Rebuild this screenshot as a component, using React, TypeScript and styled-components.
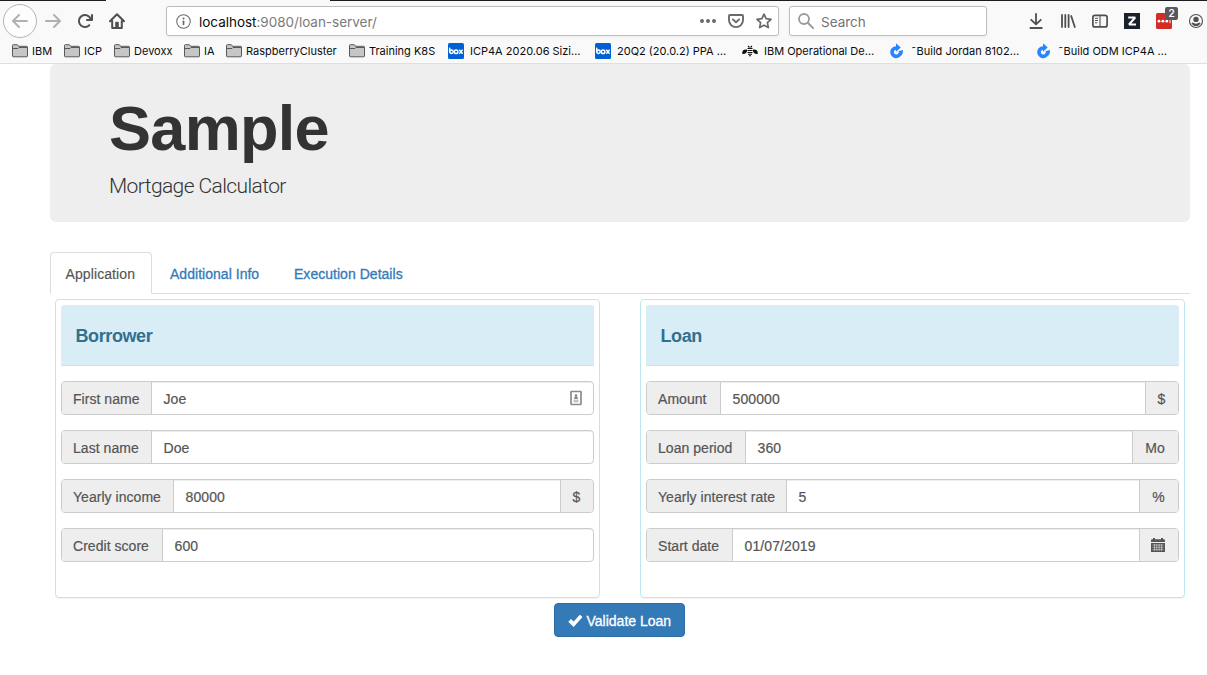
import React from "react";
import styled, { createGlobalStyle } from "styled-components";

const Global = createGlobalStyle`
  * { box-sizing: border-box; }
  html, body { margin: 0; height: 100%; overflow: hidden; background: #fff; }
  body {
    font-family: "Liberation Sans", Arial, sans-serif;
    font-size: 14px;
    line-height: 20px;
    color: #333;
  }
  svg { display: block; flex: none; }
`;

/* ---------- Browser chrome ---------- */

const Chrome = styled.header`
  height: 64px;
  background: #f9f9fa;
  border-bottom: 1px solid #dedede;
  font-family: Inter, sans-serif;
  color: #0c0c0d;
  display: flex;
  flex-direction: column;
`;

const TabStrip = styled.div`
  height: 1px;
  flex: none;
  background: linear-gradient(to right, #1c1b1f 106px, #f9f9fa 106px, #f9f9fa 330px, #1c1b1f 330px);
`;

const NavBar = styled.div`
  height: 40px;
  flex: none;
  display: flex;
  align-items: center;
  padding-left: 3px;
`;

const BackButton = styled.div`
  width: 34px;
  height: 34px;
  border: 1px solid #b4b4b5;
  border-radius: 50%;
  background: #fdfdfd;
  display: flex;
  align-items: center;
  justify-content: center;
`;

const NavIcons = styled.div`
  display: flex;
  gap: 16px;
  margin: 0 41px 0 8px;
`;

const Field = styled.div<{ $width: number }>`
  width: ${(p) => p.$width}px;
  height: 30px;
  flex: none;
  display: flex;
  align-items: center;
  background: #fff;
  border: 1px solid #bdbdbe;
  border-radius: 3px;
  box-shadow: 0 1px 3px rgba(0, 0, 0, 0.05);
  font-size: 14px;
`;

const UrlField = styled(Field)`
  padding: 0 6px 0 9px;
  margin-right: 10px;
`;

const SearchField = styled(Field)`
  padding: 0 8px;
  gap: 7px;
  color: #737373;
  margin-right: 41px;
  font-size: 13.5px;
`;

const FieldText = styled.span`
  padding-top: 1px;
`;

const Url = styled(FieldText)`
  flex: 1;
  margin-left: 8px;
  color: #7a7a7b;
  font-size: 13.5px;
  letter-spacing: -0.02px;
  b { font-weight: 400; color: #0c0c0d; }
`;

const FieldIcons = styled.div`
  display: flex;
  gap: 12px;
`;

const Tools = styled.div`
  display: flex;
  gap: 16px;
`;

const Badged = styled.div`
  position: relative;
`;

const Badge = styled.span`
  position: absolute;
  left: 9px;
  top: -6px;
  width: 13px;
  height: 13px;
  border-radius: 2px;
  background: #58595b;
  color: #fff;
  font-size: 10px;
  font-weight: 600;
  line-height: 13px;
  text-align: center;
`;

const Bookmarks = styled.div`
  height: 20px;
  display: flex;
  align-items: center;
  padding-left: 12px;
  font-size: 11px;
  line-height: 16px;
`;

const Bookmark = styled.div<{ $width: number; $gap: number }>`
  width: ${(p) => p.$width}px;
  flex: none;
  display: flex;
  align-items: center;
  gap: ${(p) => p.$gap}px;
  white-space: nowrap;
`;

/* ---------- Page ---------- */

const Page = styled.main`
  width: 1140px;
  margin-left: 50px;
`;

const Hero = styled.section`
  height: 158px;
  padding: 29px 59px 0;
  margin-bottom: 30px;
  background: #eee;
  border-radius: 6px;
`;

const Title = styled.h1`
  margin: 0 0 10px;
  font-size: 63px;
  line-height: 70px;
  font-weight: 700;
  letter-spacing: -0.7px;
`;

const Subtitle = styled.p`
  margin: 0;
  font-family: Roboto, sans-serif;
  font-size: 21px;
  line-height: 26px;
  font-weight: 300;
  letter-spacing: -0.6px;
`;

const Tabs = styled.nav`
  display: flex;
  gap: 2px;
  height: 42px;
  border-bottom: 1px solid #ddd;
`;

const Tab = styled.a<{ $active?: boolean; $width: number }>`
  width: ${(p) => p.$width}px;
  height: 42px;
  padding: 11px 0 0 ${(p) => (p.$active ? 14.5 : 15)}px;
  border: 1px solid ${(p) => (p.$active ? "#ddd" : "transparent")};
  border-bottom-color: ${(p) => (p.$active ? "#fff" : "transparent")};
  border-radius: 4px 4px 0 0;
  background: ${(p) => (p.$active ? "#fff" : "transparent")};
  color: ${(p) => (p.$active ? "#555" : "#337ab7")};
  letter-spacing: ${(p) => (p.$active ? 0.1 : 0.03)}px;
  -webkit-text-stroke: ${(p) => (p.$active ? "0.15px" : "0.3px")};
  white-space: nowrap;
`;

const Columns = styled.div`
  display: grid;
  grid-template-columns: 545px 545px;
  gap: 40px;
  padding: 5px;
`;

const Panel = styled.section`
  height: 299px;
  padding: 5px;
  border: 1px solid #bce8f1;
  border-radius: 4px;
  box-shadow: 0 1px 1px rgba(0, 0, 0, 0.05);
`;

const PanelHeading = styled.h3`
  height: 61px;
  margin: 0 0 15px;
  padding: 1px 14.5px 0;
  border-bottom: 1px solid #bce8f1;
  border-radius: 3px 3px 0 0;
  background: #d9edf7;
  color: #31708f;
  font-size: 18px;
  line-height: 61px;
  font-weight: 700;
  letter-spacing: -0.4px;
`;

const Group = styled.div`
  display: flex;
  height: 34px;
  margin-bottom: 15px;
  border: 1px solid #ccc;
  border-radius: 4px;
  overflow: hidden;
  color: #555;
  line-height: 34px;
  -webkit-text-stroke: 0.2px;
`;

const Label = styled.label<{ $width: number }>`
  width: ${(p) => p.$width}px;
  padding-left: 11px;
  background: #eee;
  border-right: 1px solid #ccc;
  letter-spacing: 0.04px;
  white-space: nowrap;
`;

const Value = styled.div`
  flex: 1;
  display: flex;
  align-items: center;
  justify-content: space-between;
  padding: 0 11px 0 11.5px;
  box-shadow: inset 0 1px 1px rgba(0, 0, 0, 0.075);
  span { padding-top: 2px; letter-spacing: 0.1px; }
`;

const Unit = styled.div<{ $width: number }>`
  width: ${(p) => p.$width}px;
  padding: 1px 1px 0 0;
  display: flex;
  align-items: center;
  justify-content: center;
  background: #eee;
  border-left: 1px solid #ccc;
  svg { margin: 0 2px 2px 0; }
`;

const Submit = styled.button`
  display: flex;
  align-items: center;
  gap: 4px;
  width: 131px;
  height: 34px;
  margin-left: 504px;
  padding: 2px 0 0 12.5px;
  border: 1px solid #2e6da4;
  border-radius: 4px;
  background: #337ab7;
  color: #fff;
  font: 14px/20px "Liberation Sans", Arial, sans-serif;
  -webkit-text-stroke: 0.3px;
  white-space: nowrap;
`;

/* ---------- Icons ---------- */

const Glyph = ({ children, color = "#4f4f51", size = 16 }: { children: React.ReactNode; color?: string; size?: number }) => (
  <svg width={size} height={size} viewBox="0 0 16 16" fill={color} stroke="none" color={color}>
    {children}
  </svg>
);

const Back = () => (
  <Glyph color="#b0b0b1"><path d="M15 7H3.414l4.293-4.293a1 1 0 0 0-1.414-1.414l-6 6a1 1 0 0 0 0 1.414l6 6a1 1 0 0 0 1.414-1.414L3.414 9H15a1 1 0 0 0 0-2z" /></Glyph>
);
const Forward = () => (
  <Glyph color="#b0b0b1"><path d="M15.707 7.293l-6-6a1 1 0 0 0-1.414 1.414L12.586 7H1a1 1 0 0 0 0 2h11.586l-4.293 4.293a1 1 0 1 0 1.414 1.414l6-6a1 1 0 0 0 0-1.414z" /></Glyph>
);
const Reload = () => (
  <Glyph><path d="M15 1a1 1 0 0 0-1 1v2.418A6.995 6.995 0 1 0 8 15a6.954 6.954 0 0 0 4.95-2.05 1 1 0 0 0-1.414-1.414A5.019 5.019 0 1 1 12.549 6H10a1 1 0 0 0 0 2h5a1 1 0 0 0 1-1V2a1 1 0 0 0-1-1z" /></Glyph>
);
const Home = () => (
  <Glyph>
    <path d="M1 8.2L8 1.3l7 6.9M3.2 8v7h9.6V8" fill="none" stroke="currentColor" strokeWidth="2" strokeLinejoin="round" strokeLinecap="round" />
    <path d="M6.2 15V9.8a1 1 0 0 1 1-1h1.6a1 1 0 0 1 1 1V15z" />
  </Glyph>
);
const Info = () => (
  <Glyph color="#6a6a6b" size={15}>
    <circle cx="8" cy="8" r="7.2" fill="none" stroke="currentColor" strokeWidth="1.1" />
    <circle cx="8" cy="4.7" r="1.1" />
    <rect x="7.1" y="6.9" width="1.8" height="5" rx=".9" />
  </Glyph>
);
const Dots = () => (
  <Glyph color="#6a6a6b">
    <circle cx="2" cy="8" r="2" /><circle cx="8" cy="8" r="2" /><circle cx="14" cy="8" r="2" />
  </Glyph>
);
const Pocket = () => (
  <Glyph color="#6a6a6b">
    <path d="M1.9 2h12.2a.9.9 0 0 1 .9.9v4.2a7 7 0 0 1-14 0V2.9A.9.9 0 0 1 1.9 2z" fill="none" stroke="currentColor" strokeWidth="1.9" />
    <path d="M4.9 6.4L8 9.3l3.1-2.9" fill="none" stroke="currentColor" strokeWidth="1.9" strokeLinecap="round" strokeLinejoin="round" />
  </Glyph>
);
const Star = () => (
  <Glyph color="#6a6a6b">
    <path d="M8 1.2l2.1 4.5 4.9.6-3.6 3.4.95 4.9L8 12.2l-4.35 2.4.95-4.9L1 6.3l4.9-.6z" fill="none" stroke="currentColor" strokeWidth="1.7" strokeLinejoin="round" />
  </Glyph>
);
const Magnifier = () => (
  <Glyph color="#9a9a9b">
    <circle cx="6" cy="6" r="5" fill="none" stroke="currentColor" strokeWidth="1.8" />
    <path d="M9.8 9.8l5.3 5.3" stroke="currentColor" strokeWidth="2" strokeLinecap="round" />
  </Glyph>
);
const Download = () => (
  <Glyph>
    <path d="M8 1v10M3.2 6.8L8 11.4l4.8-4.6M2.4 15h11.4" fill="none" stroke="currentColor" strokeWidth="1.8" strokeLinecap="round" strokeLinejoin="round" />
  </Glyph>
);
const Library = () => (
  <Glyph>
    <path d="M2 2v12M5.3 2v12M8.6 2v12M11.2 3l3.6 11" fill="none" stroke="currentColor" strokeWidth="1.8" strokeLinecap="round" />
  </Glyph>
);
const Sidebar = () => (
  <Glyph>
    <rect x=".9" y="2.3" width="14.2" height="11.6" rx="2" fill="none" stroke="currentColor" strokeWidth="1.7" />
    <path d="M8 2v12M3 5.3h3M3 7.5h3M3 9.7h2.2" fill="none" stroke="currentColor" strokeWidth="1.1" />
  </Glyph>
);
const Zed = () => (
  <Glyph>
    <rect width="16" height="16" fill="#1a212b" />
    <path d="M4.2 4.5h7L5 11.5h7" fill="none" stroke="#fff" strokeWidth="2" strokeLinejoin="bevel" />
  </Glyph>
);
const Password = () => (
  <Glyph>
    <rect width="16" height="16" rx="1.5" fill="#d32d27" />
    <g fill="#fff"><circle cx="3" cy="8.2" r="1.4" /><circle cx="6.9" cy="8.2" r="1.4" /><circle cx="10.8" cy="8.2" r="1.4" /><rect x="13.6" y="6.4" width=".9" height="3.8" /></g>
  </Glyph>
);
const Profile = () => (
  <Glyph>
    <circle cx="8" cy="8" r="6.5" fill="none" stroke="currentColor" strokeWidth="1.1" />
    <circle cx="8" cy="6.4" r="2.7" />
    <path d="M3.4 9.9q1.2-.6 2.3.1 2.300 1.300 4.600 0 1.100-.7 2.300-.1A5 5 0 0 1 8 13a5 5 0 0 1-4.600-3.100z" />
  </Glyph>
);
const Folder = () => (
  <Glyph color="#59595a">
    <path d="M.5 13V2.5q0-.8.8-.8H5q.6 0 .9.5l.7 1.1h8.100q.8 0 .8.8V13q0 .8-.8.8H1.300q-.8 0-.8-.8z" fill="#c6c6c7" stroke="currentColor" />
    <path d="M1 5.500h5l1-1h8" fill="none" stroke="currentColor" />
  </Glyph>
);
const BoxLogo = () => (
  <Glyph>
    <rect width="16" height="16" rx="1.5" fill="#0061d5" />
    <g fill="none" stroke="#fff" strokeWidth="1.5" strokeLinecap="round">
      <path d="M1.700 5.200v3.500M11.700 7.200l2.500 3M14.200 7.200l-2.500 3" />
      <circle cx="3.5" cy="8.7" r="1.7" /><circle cx="8.1" cy="8.7" r="1.8" />
    </g>
  </Glyph>
);
const Bee = () => (
  <Glyph color="#111">
    <path d="M.3 10.800C-.2 7.200 2 6 5 6.500v1.700C4.500 10 2.500 11.500.3 10.800zM15.700 10.800c.5-3.600-1.700-4.800-4.700-4.300v1.700c.5 1.800 2.500 3.300 4.700 2.600z" />
    <path d="M6 3l1.500 1.500M10 3L8.500 4.500M5.500 5.500h5M5.500 7.500h5M5.500 9.500h5M6 11.300h4M7 12.700h2" fill="none" stroke="currentColor" strokeWidth="1.1" />
  </Glyph>
);
const Build = () => (
  <Glyph>
    <path d="M7 5A4.200 4.200 0 1 0 11.300 10" fill="none" stroke="#2684ff" strokeWidth="3.6" />
    <path d="M7 .3l4.700 4.200L7 8.700z" fill="#2684ff" />
    <path d="M9.300 8.300l4.700-1.400q.6 3.400-1.800 5.900z" fill="#2684ff" />
  </Glyph>
);
const ContactCard = () => (
  <svg width="12" height="16" viewBox="0 0 12 16">
    <rect x="1" y="1.5" width="10" height="13" rx=".5" fill="#fff" stroke="#8b8b8b" strokeWidth="1.7" />
    <circle cx="6" cy="5.4" r="1.2" fill="#777" />
    <path d="M4 8.800q0-2.300 2-2.300t2 2.300z" fill="#777" />
    <path d="M3.500 10.200h5M3.500 11.800h5" stroke="#aaa" strokeWidth="1" />
  </svg>
);
const Calendar = () => (
  <svg width="14" height="14" viewBox="0 0 14 14">
    <path d="M0 2.500Q0 1.300 1.200 1.300H2V0h2v1.300h6V0h2v1.300h.8q1.200 0 1.200 1.200V4H0zM0 5h14v9H0z" fill="#555" />
    <path d="M1.500 7h11M1.500 9.300h11M1.500 11.600h11M3.500 6v7M5.800 6v7M8.200 6v7M10.500 6v7" stroke="#eee" strokeWidth=".5" />
  </svg>
);
const Check = () => (
  <svg width="15" height="14" viewBox="0 0 15 14">
    <path d="M.3 7.700l2.700-2.600 2.700 2.500L11.800.7l2.700 2.400-8.900 10z" fill="#fff" />
  </svg>
);

/* ---------- Data ---------- */

const bookmarks = [
  { icon: <Folder />, text: "IBM", width: 52, gap: 4 },
  { icon: <Folder />, text: "ICP", width: 50, gap: 4 },
  { icon: <Folder />, text: "Devoxx", width: 70, gap: 4 },
  { icon: <Folder />, text: "IA", width: 42, gap: 4 },
  { icon: <Folder />, text: "RaspberryCluster", width: 123, gap: 4 },
  { icon: <Folder />, text: "Training K8S", width: 99, gap: 4 },
  { icon: <BoxLogo />, text: "ICP4A 2020.06 Sizi…", width: 147, gap: 6 },
  { icon: <BoxLogo />, text: "20Q2 (20.0.2) PPA …", width: 147, gap: 6 },
  { icon: <Bee />, text: "IBM Operational De…", width: 147, gap: 6 },
  { icon: <Build />, text: "˜Build Jordan 8102…", width: 147, gap: 6 },
  { icon: <Build />, text: "˜Build ODM ICP4A …", width: 147, gap: 6 },
];

type Row = { label: string; width: number; value: string; unit?: React.ReactNode; unitWidth?: number; extra?: React.ReactNode };

const borrower: Row[] = [
  { label: "First name", width: 90, value: "Joe", extra: <ContactCard /> },
  { label: "Last name", width: 90, value: "Doe" },
  { label: "Yearly income", width: 112, value: "80000", unit: "$", unitWidth: 33 },
  { label: "Credit score", width: 101, value: "600" },
];

const loan: Row[] = [
  { label: "Amount", width: 74, value: "500000", unit: "$", unitWidth: 33 },
  { label: "Loan period", width: 99, value: "360", unit: "Mo", unitWidth: 46 },
  { label: "Yearly interest rate", width: 140, value: "5", unit: "%", unitWidth: 39 },
  { label: "Start date", width: 86, value: "01/07/2019", unit: <Calendar />, unitWidth: 39 },
];

const FormPanel = ({ title, rows }: { title: string; rows: Row[] }) => (
  <Panel>
    <PanelHeading>{title}</PanelHeading>
    {rows.map((r) => (
      <Group key={r.label}>
        <Label $width={r.width}>{r.label}</Label>
        <Value><span>{r.value}</span>{r.extra}</Value>
        {r.unit && <Unit $width={r.unitWidth ?? 33}>{r.unit}</Unit>}
      </Group>
    ))}
  </Panel>
);

export default function App() {
  return (
    <>
      <Global />
      <Chrome>
        <TabStrip />
        <NavBar>
          <BackButton><Back /></BackButton>
          <NavIcons><Forward /><Reload /><Home /></NavIcons>
          <UrlField $width={613}>
            <Info />
            <Url><b>localhost</b>:9080/loan-server/</Url>
            <FieldIcons><Dots /><Pocket /><Star /></FieldIcons>
          </UrlField>
          <SearchField $width={198}><Magnifier /><FieldText>Search</FieldText></SearchField>
          <Tools>
            <Download /><Library /><Sidebar /><Zed />
            <Badged><Password /><Badge>2</Badge></Badged>
            <Profile />
          </Tools>
        </NavBar>
        <Bookmarks>
          {bookmarks.map((b, i) => (
            <Bookmark key={i} $width={b.width} $gap={b.gap}>
              {b.icon}<span>{b.text}</span>
            </Bookmark>
          ))}
        </Bookmarks>
      </Chrome>
      <Page>
        <Hero>
          <Title>Sample</Title>
          <Subtitle>Mortgage Calculator</Subtitle>
        </Hero>
        <Tabs>
          <Tab $active $width={102}>Application</Tab>
          <Tab $width={122}>Additional Info</Tab>
          <Tab $width={140}>Execution Details</Tab>
        </Tabs>
        <Columns>
          <FormPanel title="Borrower" rows={borrower} />
          <FormPanel title="Loan" rows={loan} />
        </Columns>
        <Submit><Check />Validate Loan</Submit>
      </Page>
    </>
  );
}
